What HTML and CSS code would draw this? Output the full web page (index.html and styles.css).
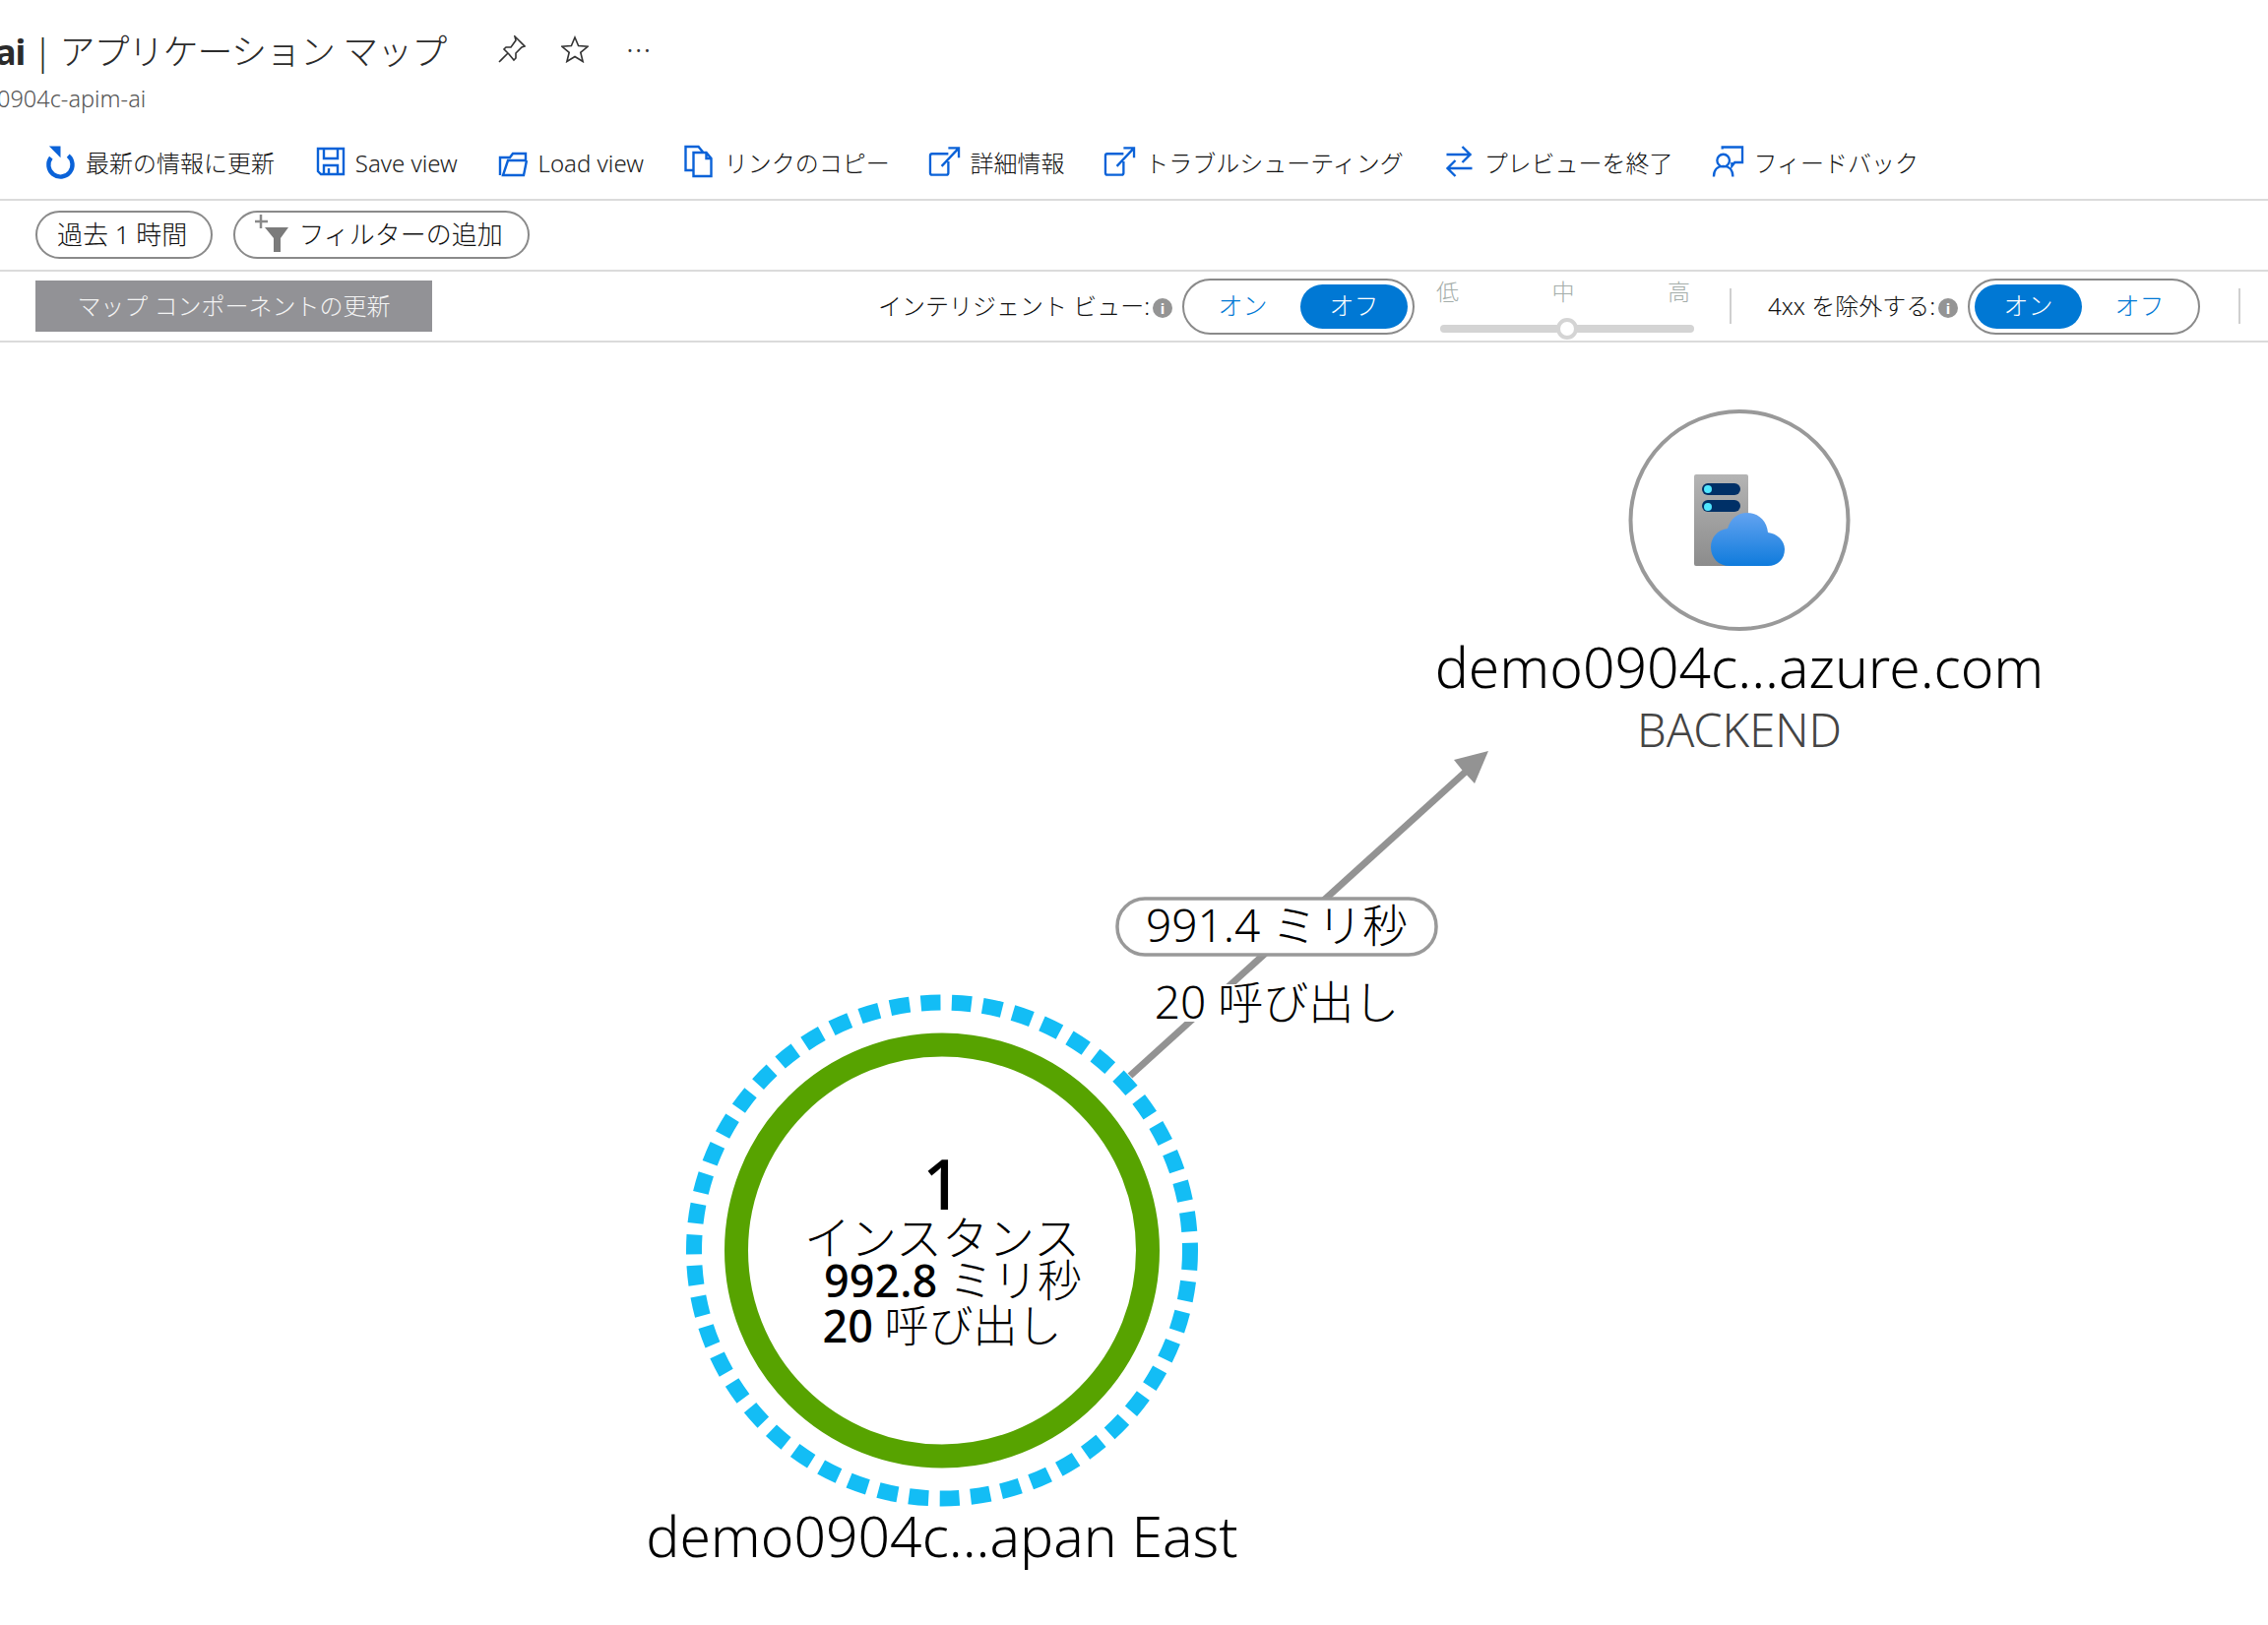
FILE: index.html
```html
<!DOCTYPE html>
<html lang="ja">
<head>
  <meta charset="UTF-8">
  <meta name="viewport" content="width=device-width, initial-scale=1.0">
  <title>アプリケーション マップ</title>
  <link rel="stylesheet" href="styles.css">
</head>
<body>
  <header class="page-head">
    <div class="title-row">
      <h1 class="title"><b>ai</b> | アプリケーション マップ</h1>
      <svg class="head-icon pin" viewBox="0 0 28 28"><path d="M17 1l10 10-3 1-6 6 0 5-2 2-5-6-5-5 2-2 5 0 5-7zM10 18L1 27"/></svg>
      <svg class="head-icon star" viewBox="0 0 28 28"><path d="M14 2l3.6 8.6 9.4.7-7.200 6 2.300 9.200-8.100-5-8.100 5 2.300-9.200-7.200-6 9.400-.7z"/></svg>
      <span class="head-more">···</span>
    </div>
    <div class="subtitle">0904c-apim-ai</div>
  </header>

  <nav class="toolbar">
    <a class="tool">
      <svg viewBox="0 0 32 32"><path class="ic-bold" d="M24 10A12.500 12.500 0 1 1 6 12"/><path class="fill" d="M4 0h12v12z"/></svg>
      <span>最新の情報に更新</span>
    </a>
    <a class="tool">
      <svg viewBox="0 0 31 32"><path class="ic" d="M3 3h26v26H6l-3-3zM9 3v10h14V3M9 29v-9h14v9M14 23v6"/></svg>
      <span class="latin">Save view</span>
    </a>
    <a class="tool">
      <svg viewBox="0 0 31 32"><path class="ic" d="M2 30V12h10l3-4h13v7H10l-5 15h21l3-15"/></svg>
      <span class="latin">Load view</span>
    </a>
    <a class="tool">
      <svg viewBox="0 0 30 32"><path class="ic" d="M9 25H1V1h13l5 6M9 7h13l5 6v18H9zM22 7v6h5"/></svg>
      <span>リンクのコピー</span>
    </a>
    <a class="tool">
      <svg viewBox="0 0 32 30"><path class="ic" d="M20 7H3a2 2 0 0 0-2 2v18a2 2 0 0 0 2 2h15a2 2 0 0 0 2-2V15M13 20L30 2M20 1h11v10"/></svg>
      <span>詳細情報</span>
    </a>
    <a class="tool">
      <svg viewBox="0 0 32 30"><path class="ic" d="M20 7H3a2 2 0 0 0-2 2v18a2 2 0 0 0 2 2h15a2 2 0 0 0 2-2V15M13 20L30 2M20 1h11v10"/></svg>
      <span>トラブルシューティング</span>
    </a>
    <a class="tool">
      <svg viewBox="0 0 30 32"><path class="ic" d="M2 9h25M18 1l8 8-8 8M28 23H3M11 15l-8 8 8 8"/></svg>
      <span>プレビューを終了</span>
    </a>
    <a class="tool">
      <svg viewBox="0 0 32 32"><path class="ic" d="M10 3V1h21v16h-8l-3 4v-4"/><circle class="ic" cx="11" cy="15" r="6.500"/><path class="ic" d="M1 32c0-7 4-11 10-11s10 4 10 11"/></svg>
      <span>フィードバック</span>
    </a>
  </nav>

  <div class="filters">
    <button class="pill">過去 1 時間</button>
    <button class="pill pill-add">
      <svg viewBox="0 0 34 38"><path class="plus" d="M6 0v14M0 7h13"/><path class="funnel" d="M10 13h24L26 24v14h-7V24z"/></svg>
      フィルターの追加
    </button>
  </div>

  <div class="controls">
    <button class="refresh-btn">マップ コンポーネントの更新</button>
    <div class="control-group smart">
      <span class="control-label">インテリジェント ビュー:</span><i class="info">i</i>
      <div class="toggle"><span>オン</span><span class="on">オフ</span></div>
    </div>
    <div class="slider">
      <div class="slider-labels"><span>低</span><span>中</span><span>高</span></div>
      <div class="slider-track"><span class="slider-thumb"></span></div>
    </div>
    <span class="divider"></span>
    <div class="control-group">
      <span class="control-label">4xx を除外する:</span><i class="info">i</i>
      <div class="toggle"><span class="on">オン</span><span>オフ</span></div>
    </div>
    <span class="divider last"></span>
  </div>

  <main class="map">
    <svg class="map-canvas" viewBox="0 350 2304 1301">
      <defs>
        <linearGradient id="serverGrad" x1="0" y1="0" x2="0" y2="1"><stop offset="0" stop-color="#b4b4b4"/><stop offset="1" stop-color="#8c8c8c"/></linearGradient>
        <linearGradient id="cloudGrad" x1="0" y1="0" x2="0" y2="1"><stop offset="0" stop-color="#63a3f0"/><stop offset="1" stop-color="#0f7bdc"/></linearGradient>
      </defs>

      <!-- edge -->
      <line class="edge" x1="1148" y1="1093" x2="1490" y2="783"/>
      <path class="edge-head" d="M1512 763L1477 772 1485 782 1498 796z"/>
      <rect class="edge-mask" x="1172" y="1000" width="248" height="38"/>
      <rect class="edge-pill" x="1135" y="913" width="324" height="57" rx="28"/>
      <text class="edge-text" x="1297" y="957">991.4 ミリ秒</text>
      <text class="edge-text" x="1297" y="1035">20 呼び出し</text>

      <!-- app node -->
      <circle class="ring-dash" cx="957" cy="1270.500" r="252"/>
      <circle class="ring-health" cx="957" cy="1270.500" r="209"/>
      <text class="node-count" x="957" y="1229">1</text>
      <text class="node-line node-unit" x="957" y="1275">インスタンス</text>
      <text class="node-line" x="968" y="1318"><tspan class="semi">992.8</tspan> ミリ秒</text>
      <text class="node-line" x="957" y="1364"><tspan class="semi">20</tspan> 呼び出し</text>
      <text class="node-name" x="957" y="1582">demo0904c...apan East</text>

      <!-- backend node -->
      <circle class="backend-ring" cx="1767" cy="528.500" r="110.500"/>
      <rect x="1721" y="482" width="55" height="93" rx="2" fill="url(#serverGrad)"/>
      <rect x="1729" y="491" width="39" height="12" rx="6" fill="#003067"/>
      <rect x="1729" y="508" width="39" height="12" rx="6" fill="#003067"/>
      <circle cx="1735" cy="497" r="4" fill="#50e6ff"/>
      <circle cx="1735" cy="515" r="4" fill="#50e6ff"/>
      <path d="M1757 575c-11 0-19-8-19-19 0-10 7-18 17-19 3-10 10-16 20-16 11 0 20 8 21 20 9 1 17 8 17 17 0 10-7 17-17 17z" fill="url(#cloudGrad)"/>
      <text class="node-name" x="1767" y="699">demo0904c...azure.com</text>
      <text class="node-type" x="1767" y="759">BACKEND</text>
    </svg>
  </main>
</body>
</html>
```

FILE: styles.css
```css
:root {
  --text-color: #111;
  --line-color: #dbdbdb;
  --icon-blue: #0a62d8;
  --toggle-blue: #0078d4;
  --pill-border: #8a8a8a;
}
* { margin: 0; padding: 0; box-sizing: border-box; }
html, body { width: 2304px; height: 1651px; overflow: hidden; }
body {
  background: white;
  color: var(--text-color);
  font-family: "Noto Sans", "Noto Sans CJK JP", sans-serif;
  font-weight: 300;
}

/* Title block */
.page-head { height: 130px; padding-top: 20px; }
.title-row { display: flex; align-items: center; height: 60px; margin-left: -5px; }
.title { font-size: 36px; font-weight: 300; letter-spacing: -1px; color: #2b2b2b; width: 511px; white-space: nowrap; }
.title b { font-weight: 700; }
.head-icon { width: 28px; height: 28px; fill: none; stroke: #333; stroke-width: 1.600; }
.star { margin-left: 36px; }
.head-more { margin-left: 38px; font-size: 32px; line-height: 1; color: #333; letter-spacing: 1px; }
.subtitle { margin-left: -3px; margin-top: 4px; font-size: 23.500px; color: #555; }

/* Toolbar */
.toolbar {
  display: flex;
  align-items: center;
  gap: 40.800px;
  height: 74px;
  padding: 0 0 4px 46px;
  border-bottom: 2px solid var(--line-color);
}
.tool { display: flex; align-items: center; gap: 10px; font-size: 24px; white-space: nowrap; }
.tool svg { width: 31px; height: 32px; overflow: visible; }
.tool .latin { font-size: 24px; color: #222; padding-top: 3px; }
.ic { fill: none; stroke: var(--icon-blue); stroke-width: 2.400; }
.ic-bold { fill: none; stroke: var(--icon-blue); stroke-width: 4.500; }
.fill { fill: var(--icon-blue); }

/* Filter row */
.filters {
  display: flex;
  align-items: center;
  gap: 21px;
  height: 72px;
  padding-left: 36px;
  padding-bottom: 2px;
  border-bottom: 2px solid var(--line-color);
}
.pill {
  display: flex;
  align-items: center;
  gap: 10px;
  height: 49px;
  padding: 0 24px 3px 20px;
  background: white;
  border: 2px solid var(--pill-border);
  border-radius: 25px;
  font: inherit;
  font-size: 26px;
  color: var(--text-color);
}
.pill-add { padding-right: 25px; }
.pill-add svg { width: 34px; height: 38px; }
.plus { fill: none; stroke: #8a8a8a; stroke-width: 2.500; }
.funnel { fill: #7b7b7b; }

/* Controls row */
.controls {
  display: flex;
  align-items: center;
  height: 72px;
  padding: 0 28px 0 36px;
  border-bottom: 2px solid var(--line-color);
}
.refresh-btn {
  width: 403px;
  height: 52px;
  border: 0;
  padding-bottom: 3px;
  background: #929296;
  color: #f4f4f4;
  font: inherit;
  font-size: 24px;
}
.control-group { display: flex; align-items: center; }
.smart { margin-left: auto; }
.control-label { padding-bottom: 4px; font-size: 24px; white-space: nowrap; }
.info {
  display: flex;
  align-items: center;
  justify-content: center;
  width: 20px;
  height: 20px;
  margin: 3px 0 0 3px;
  border-radius: 50%;
  background: #949494;
  color: white;
  font-size: 15px;
  font-style: normal;
  font-weight: 700;
}
.toggle {
  display: flex;
  align-items: center;
  gap: 4px;
  width: 236px;
  height: 57px;
  margin-left: 10px;
  padding: 0 5px;
  border: 2px solid var(--pill-border);
  border-radius: 29px;
  font-size: 25px;
  color: var(--toggle-blue);
}
.toggle span { flex: 1; height: 45px; line-height: 43px; text-align: center; border-radius: 23px; }
.toggle .on { background: var(--toggle-blue); color: white; }

.slider { width: 258px; margin: -2px 0 0 26px; }
.slider-labels { display: flex; justify-content: space-between; margin: 0 4px 21px -4px; font-size: 23px; color: #a4adaa; line-height: 26px; }
.slider-track { position: relative; height: 8px; border-radius: 4px; background: #d4d4d4; }
.slider-thumb {
  position: absolute;
  left: 118px;
  top: -7px;
  width: 22px;
  height: 22px;
  border: 4px solid #d4d4d4;
  border-radius: 50%;
  background: white;
}
.divider { width: 2px; height: 36px; margin: 0 37px 0 36px; background: #cfcfcf; }
.divider.last { margin: 0 0 0 39px; }

/* Map */
.map { height: 1301px; margin-top: 2px; }
.map-canvas { display: block; width: 2304px; height: 1301px; }
.map-canvas text { text-anchor: middle; fill: black; }
.edge { stroke: #939393; stroke-width: 7; }
.edge-head { fill: #939393; }
.edge-mask { fill: white; }
.edge-pill { fill: white; stroke: #999; stroke-width: 3.500; }
.edge-text { font-size: 46px; }
.ring-dash { fill: none; stroke: #13bdf5; stroke-width: 16; stroke-dasharray: 20 11.500; }
.ring-health { fill: white; stroke: #57a300; stroke-width: 24; }
.backend-ring { fill: white; stroke: #999; stroke-width: 4; }
.node-count { font-size: 70px; font-weight: 500; }
.node-line { font-size: 45px; }
.node-unit { font-size: 47px; }
.semi { font-weight: 500; }
.node-name { font-size: 57px; }
.map-canvas .node-type { font-size: 47px; fill: #444; }
```
